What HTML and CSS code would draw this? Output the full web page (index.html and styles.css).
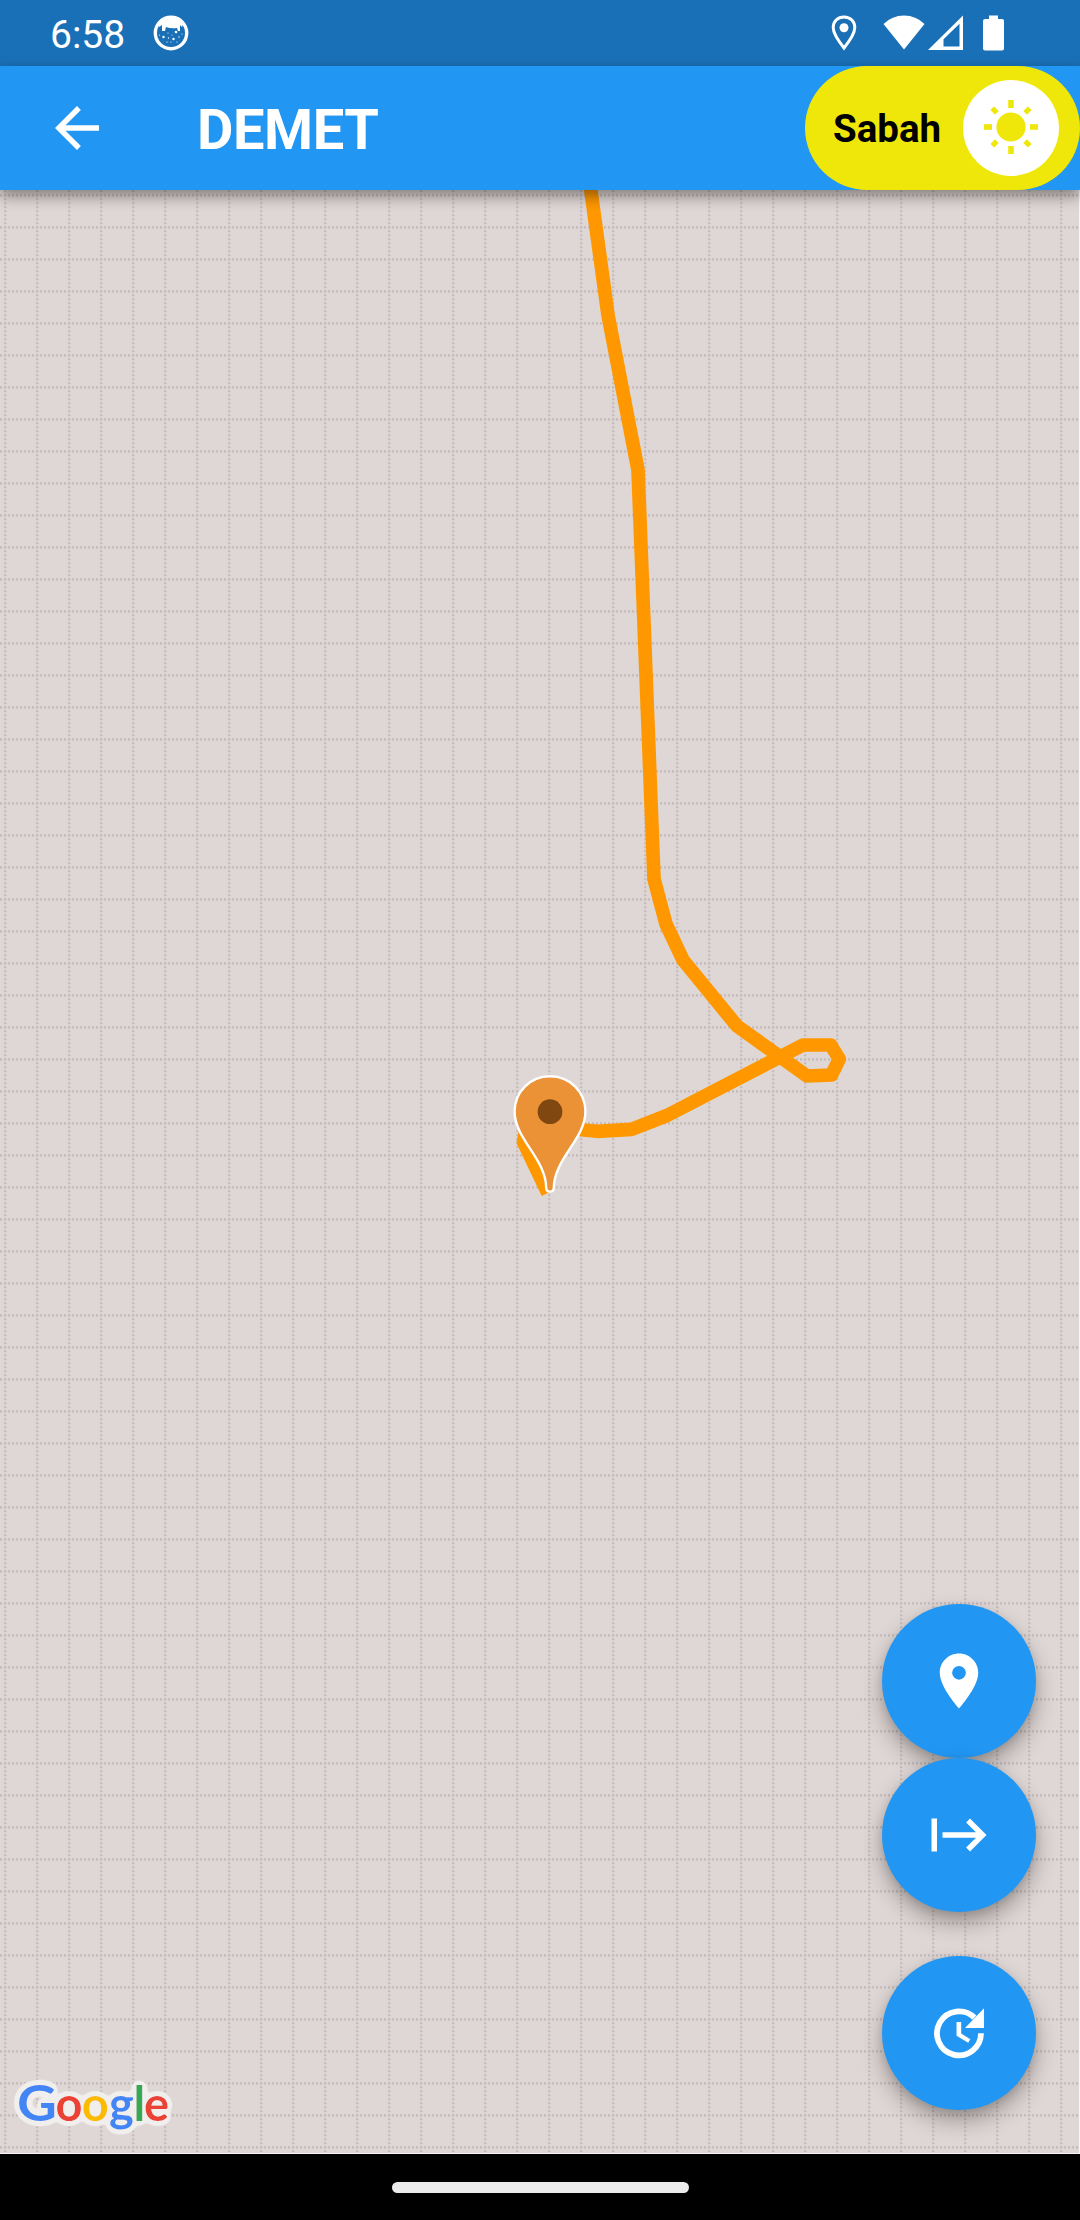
FILE: index.html
```
<!DOCTYPE html>
<html lang="tr">
<head>
<meta charset="utf-8">
<title>DEMET</title>
<link rel="stylesheet" href="styles.css">
</head>
<body>
<div class="screen">
  <header class="status-bar">
    <span class="clock">6:58</span>
    <svg class="app-icon" width="36" height="36" viewBox="0 0 36 36">
      <circle cx="18" cy="18" r="15.7" fill="none" stroke="#fff" stroke-width="3.4"/>
      <path fill="#fff" d="M5 7Q18-3 31 7L29 12 27 10 27 16 25 16 24 13Q18 14 13 12L12 16 9 16 9 10 6 12Z"/>
      <g fill="#fff"><circle cx="23" cy="17" r="1.3"/><circle cx="10.500" cy="22" r="1.200"/><circle cx="20.500" cy="24" r="1.200"/><circle cx="15" cy="18" r=".6"/><circle cx="15.500" cy="23" r=".7"/><circle cx="26" cy="22" r=".7"/><circle cx="14" cy="27" r=".6"/><circle cx="18" cy="27" r=".6"/><circle cx="24" cy="27" r=".6"/><circle cx="6.500" cy="20" r=".6"/><circle cx="29" cy="19" r=".6"/><circle cx="19" cy="20" r=".5"/></g>
    </svg>
    <div class="system-icons">
      <svg width="26" height="36" viewBox="0 0 26 36">
        <path d="M13 2C6.500 2 2.200 6.600 2.200 12.600 2.200 19.500 9 28 13 33 17 28 23.800 19.500 23.800 12.600 23.800 6.600 19.500 2 13 2Z" fill="none" stroke="#fff" stroke-width="3"/>
        <circle cx="13" cy="12.800" r="4.500" fill="#fff"/>
      </svg>
      <svg class="wifi" width="42" height="36" viewBox="0 0 42 36"><path fill="#fff" d="M.5 9Q9 .5 21 .5T41.500 9L21 34.500Z"/></svg>
      <svg class="signal" width="35" height="36" viewBox="0 0 35 36"><path fill="#fff" fill-rule="evenodd" d="M0 35H35V.5ZM15.500 31.500V24.300L31.500 8.800V31.500Z"/></svg>
      <svg class="battery" width="21" height="36" viewBox="0 0 21 36"><path fill="#fff" d="M6 .5H15V4H19Q21 4 21 6V33.500Q21 35.500 19 35.500H2Q0 35.500 0 33.500V6Q0 4 2 4H6Z"/></svg>
    </div>
  </header>

  <nav class="app-bar">
    <svg class="back" width="66" height="66" viewBox="0 0 24 24"><path fill="#fff" d="M20 11H7.830l5.590-5.590L12 4l-8 8 8 8 1.410-1.410L7.830 13H20z"/></svg>
    <h1 class="title">DEMET</h1>
    <div class="toggle">
      <span class="toggle-label">Sabah</span>
      <span class="knob">
        <svg width="60" height="60" viewBox="-30 -30 60 60" fill="#efe709">
          <circle r="14.600"/>
          <rect x="-2.800" y="-27" width="5.600" height="8"/>
          <rect x="-2.800" y="19" width="5.600" height="8"/>
          <rect x="-27" y="-2.800" width="8" height="5.600"/>
          <rect x="19" y="-2.800" width="8" height="5.600"/>
          <g transform="rotate(45)">
            <rect x="-2.600" y="-26.500" width="5.200" height="6.500"/>
            <rect x="-2.600" y="20" width="5.200" height="6.500"/>
            <rect x="-26.500" y="-2.600" width="6.500" height="5.200"/>
            <rect x="20" y="-2.600" width="6.500" height="5.200"/>
          </g>
        </svg>
      </span>
    </div>
  </nav>

  <main class="map">
    <svg class="map-canvas" width="1079" height="1963" viewBox="0 190 1079 1963">
      <defs>
        <pattern id="grid" x="0" y="190" width="32" height="32" patternUnits="userSpaceOnUse">
          <path d="M0 5.300H32" stroke="#c3bab9" stroke-width="2.200" stroke-dasharray="2 2"/>
          <path d="M5.200 .3V32" stroke="#c3bab9" stroke-width="2.200" stroke-dasharray="2 2"/>
        </pattern>
        <filter id="halo" x="-20%" y="-30%" width="140%" height="160%">
          <feGaussianBlur in="SourceAlpha" stdDeviation="3.500"/>
          <feComponentTransfer><feFuncA type="linear" slope="20" intercept="-.8"/></feComponentTransfer>
          <feComposite in2="SourceAlpha" operator="over" result="shape"/>
          <feFlood flood-color="#f1efee"/>
          <feComposite in2="shape" operator="in"/>
          <feMerge><feMergeNode/><feMergeNode in="SourceGraphic"/></feMerge>
        </filter>
      </defs>
      <rect y="190" width="1079" height="1963" fill="url(#grid)"/>
      <polyline class="route" points="590,184 608,315 638,470 654,879 666,924 683,960 737,1026 807,1076 831.500,1075 839.300,1059 830.700,1045 803,1045 667,1115.500 631.500,1129.300 597.500,1131.300 583,1130 550,1121 527,1125 523.500,1142 547.900,1193"/>
      <path class="marker" d="M550 1076.300C530 1076.300 514.600 1092 514.600 1111.500C514.600 1139 546.200 1159 546.200 1188Q546.200 1191.600 550 1191.600T553.800 1188C553.800 1159 585.400 1139 585.400 1111.500C585.400 1092 570 1076.300 550 1076.300Z"/>
      <circle cx="550" cy="1111.700" r="12.400" fill="#804711"/>
      <text class="brand" y="2121" filter="url(#halo)"><tspan x="17" fill="#4285f4" class="brand-g" textLength="40" lengthAdjust="spacingAndGlyphs">G</tspan><tspan x="55.500" fill="#ea4335">o</tspan><tspan x="81.800" fill="#fbbc05">o</tspan><tspan x="109" fill="#4285f4">g</tspan><tspan x="133.500" fill="#34a853">l</tspan><tspan x="144" fill="#ea4335">e</tspan></text>
    </svg>

    <div class="actions">
      <button class="fab" aria-label="Konum"><svg width="66" height="66" viewBox="0 0 24 24"><path fill="#fff" d="M12 2C8.130 2 5 5.130 5 9c0 5.250 7 13 7 13s7-7.750 7-13c0-3.870-3.130-7-7-7zm0 9.500a2.500 2.500 0 1 1 0-5 2.500 2.500 0 0 1 0 5z"/></svg></button>
      <button class="fab" aria-label="Başla"><svg width="66" height="66" viewBox="0 0 24 24"><path fill="#fff" d="M14.590 7.410 18.170 11H6v2h12.170l-3.590 3.590L16 18l6-6-6-6-1.410 1.410zM2 6v12h2V6H2z"/></svg></button>
      <button class="fab fab-last" aria-label="Güncelle"><svg width="66" height="66" viewBox="0 0 24 24"><path fill="none" stroke="#fff" stroke-width="2.100" d="M20 12.100A8 8 0 1 1 17.600 6.400"/><path fill="#fff" d="M21.100 3v7.200H14.200zM11.100 8v5l4.250 2.520.77-1.280-3.320-2.090V8z"/></svg></button>
    </div>
  </main>

  <footer class="nav-bar"><div class="handle"></div></footer>
</div>
</body>
</html>
```
FILE: styles.css
```
* { box-sizing: border-box; }

body {
  margin: 0;
  font-family: Roboto, "Liberation Sans", sans-serif;
  background: #000;
}

.screen {
  width: 1080px;
  height: 2220px;
  display: flex;
  flex-direction: column;
  overflow: hidden;
}

.status-bar {
  height: 66px;
  flex: none;
  display: flex;
  align-items: center;
  padding: 0 76px 0 50px;
  background: #1a70b7;
  color: #fff;
}

.clock {
  width: 103px;
  font-size: 39px;
  line-height: 46px;
  padding-top: 3px;
}

.app-icon { display: block; }

.system-icons {
  margin-left: auto;
  display: flex;
  align-items: center;
}

.wifi { margin-left: 26px; }
.signal { margin-left: 3px; }
.battery { margin-left: 20px; }

.app-bar {
  height: 123.500px;
  flex: none;
  display: flex;
  align-items: center;
  padding-left: 44px;
  background: #2196f3;
  box-shadow: 0 6px 14px rgba(0, 0, 0, .42);
  position: relative;
  z-index: 1;
}

.title {
  margin: 0 0 0 87px;
  font-size: 56px;
  font-weight: 700;
  line-height: 66px;
  letter-spacing: -.4px;
  color: #fff;
  padding-top: 4px;
}

.toggle {
  width: 275px;
  height: 100%;
  margin-left: auto;
  padding: 0 21px 0 28px;
  display: flex;
  align-items: center;
  justify-content: space-between;
  border-radius: 62px;
  background: #efe709;
}

.toggle-label {
  padding-top: 2px;
  font-size: 38.500px;
  font-weight: 700;
  color: #000;
}

.knob {
  width: 96px;
  height: 96px;
  display: flex;
  align-items: center;
  justify-content: center;
  padding-bottom: 2px;
  border-radius: 50%;
  background: #fff;
}

.map {
  flex: 1;
  position: relative;
  overflow: hidden;
  background: #dfd7d5;
  border-right: 1px solid #f7f5f5;
  border-bottom: 1px solid #f7f5f5;
}

.map-canvas { display: block; }

.route {
  fill: none;
  stroke: #ff9800;
  stroke-width: 13.700px;
  stroke-linejoin: round;
}

.marker {
  fill: #ea9235;
  stroke: #fff;
  stroke-width: 2.400px;
}

.brand {
  font-family: Lato, sans-serif;
  font-size: 47px;
  font-weight: 700;
}

.brand-g { font-size: 50px; }

/* Floating buttons over the map */
.actions {
  position: absolute;
  right: 43px;
  bottom: 43px;
  display: flex;
  flex-direction: column;
}

.fab {
  width: 154px;
  height: 154px;
  padding: 0;
  border: 0;
  border-radius: 50%;
  display: flex;
  align-items: center;
  justify-content: center;
  background: #2196f3;
  box-shadow: 0 11px 22px rgba(0, 0, 0, .3), 0 3px 8px rgba(0, 0, 0, .1);
}

.fab-last { margin-top: 44px; }

.nav-bar {
  height: 66px;
  flex: none;
  display: flex;
  align-items: center;
  justify-content: center;
  background: #000;
}

.handle {
  width: 297px;
  height: 11px;
  border-radius: 6px;
  background: #ebebeb;
}
```
